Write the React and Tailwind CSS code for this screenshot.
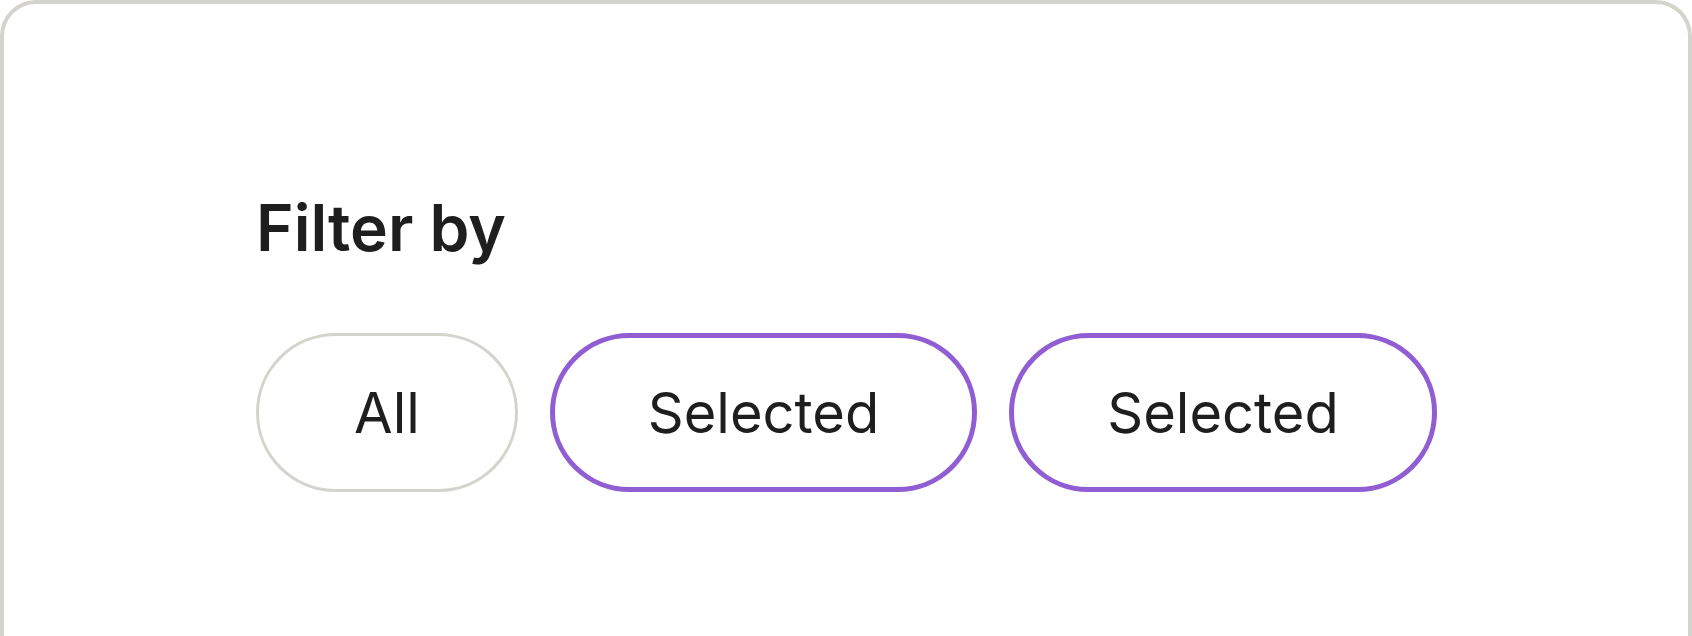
export default function App() {
  const options = [
    { label: 'All', selected: false },
    { label: 'Selected', selected: true },
    { label: 'Selected', selected: true },
  ];

  return (
    <div className="h-[636px] w-[1692px] overflow-hidden bg-white font-['Inter',sans-serif] text-[#1e1e1e]">
      <div className="h-[760px] rounded-t-[36px] border-[4px] border-b-0 border-[#d4d3cc] pl-[252px] pt-[192px]">
        <h2 className="text-[64px] font-semibold leading-[64px]">Filter by</h2>
        <div className="mt-[73px] flex gap-[32px]">
          {options.map((opt, i) => (
            <button
              key={i}
              className={
                opt.selected
                  ? 'flex h-[159px] items-center rounded-full border-[5px] border-[#905dd3] px-[93px] text-[56px] leading-none'
                  : 'flex h-[159px] items-center rounded-full border-[3px] border-[#d4d3cc] px-[95px] text-[56px] leading-none'
              }
            >
              {opt.label}
            </button>
          ))}
        </div>
      </div>
    </div>
  );
}
